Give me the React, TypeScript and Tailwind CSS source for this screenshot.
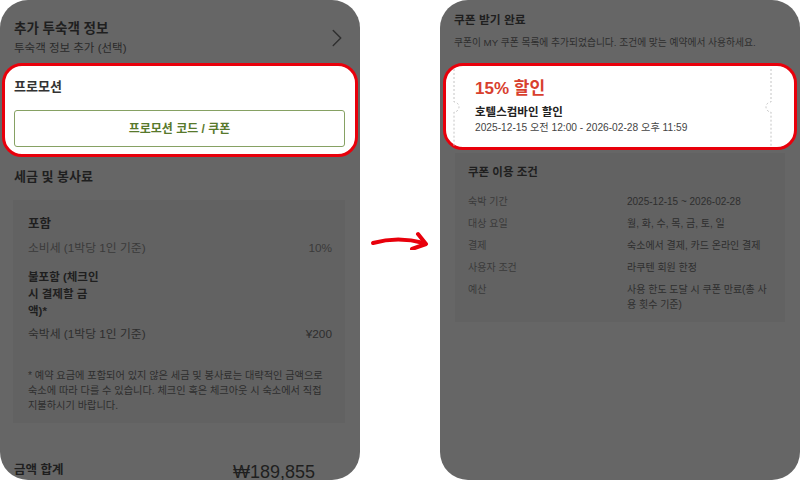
import { Fragment } from 'react';
import { ChevronRight } from 'lucide-react';

const conditions = [
    ['숙박 기간', ['2025-12-15 ~ 2026-02-28']],
    ['대상 요일', ['월, 화, 수, 목, 금, 토, 일']],
    ['결제', ['숙소에서 결제, 카드 온라인 결제']],
    ['사용자 조건', ['라쿠텐 회원 한정']],
    ['예산', ['사용 한도 도달 시 쿠폰 만료(총 사', '용 횟수 기준)']],
] as const;

function BookingPanel() {
    return (
        <div className="h-[480px] w-[360px] shrink-0 overflow-hidden rounded-[28px] bg-[#666666]">
            <div className="flex items-center justify-between pl-[14px] pr-[8px] pt-[19px]">
                <div>
                    <p className="text-[13.5px] font-bold leading-[20px] text-[#1f1f1f]">추가 투숙객 정보</p>
                    <p className="text-[11.5px] leading-[18px] text-[#2a2a2a]">투숙객 정보 추가 (선택)</p>
                </div>
                <ChevronRight className="text-[#303030]" size={30} strokeWidth={1.2} />
            </div>

            <div className="mx-[2px] mt-[6px] rounded-[20px] border-[3px] border-[#e8000b] bg-white pb-[7px] pl-[9px] pr-[10px] pt-[11px]">
                <p className="text-[13px] font-bold leading-[20px] text-[#333333]">프로모션</p>
                <button className="mt-[13px] flex h-[37px] w-full items-center justify-center rounded-[3px] border border-[#86a163] text-[12px] font-bold text-[#58792c]">
                    프로모션 코드 / 쿠폰
                </button>
            </div>

            <p className="ml-[14px] mt-[10px] text-[13px] font-bold leading-[20px] text-[#1f1f1f]">세금 및 봉사료</p>

            <div className="ml-[13px] mt-[13px] w-[332px] bg-[#626262] pb-[10px] pl-[15px] pr-[13px] pt-[14px]">
                <p className="text-[12.5px] font-bold leading-[20px] text-[#1f1f1f]">포함</p>
                <div className="mt-[5px] flex justify-between text-[11.8px] leading-[18px] text-[#3a3a3a]">
                    <span>소비세 (1박당 1인 기준)</span>
                    <span>10%</span>
                </div>
                <p className="mt-[12px] whitespace-nowrap text-[11.5px] font-bold leading-[17px] text-[#1f1f1f]">
                    불포함 (체크인
                    <br />
                    시 결제할 금
                    <br />
                    액)*
                </p>
                <div className="mt-[5px] flex justify-between text-[11.8px] leading-[18px] text-[#2e2e2e]">
                    <span>숙박세 (1박당 1인 기준)</span>
                    <span>¥200</span>
                </div>
                <p className="mt-[25px] whitespace-nowrap text-[10.2px] leading-[15px] text-[#2e2e2e]">
                    * 예약 요금에 포함되어 있지 않은 세금 및 봉사료는 대략적인 금액으로
                    <br />
                    숙소에 따라 다를 수 있습니다. 체크인 혹은 체크아웃 시 숙소에서 직접
                    <br />
                    지불하시기 바랍니다.
                </p>
            </div>

            <div className="ml-[14px] mt-[37px] flex items-start justify-between pr-[45px]">
                <p className="text-[12.5px] font-bold leading-[20px] text-[#1f1f1f]">금액 합계</p>
                <p className="text-[18px] leading-[24px] text-[#1f1f1f]">₩189,855</p>
            </div>
        </div>
    );
}

function CouponPanel() {
    return (
        <div className="h-[480px] w-[360px] shrink-0 overflow-hidden rounded-[28px] bg-[#666666]">
            <p className="ml-[14px] pt-[10px] text-[11.8px] font-bold leading-[20px] text-[#1f1f1f]">쿠폰 받기 완료</p>
            <p className="ml-[14px] mt-[5px] text-[9.75px] leading-[16px] text-[#2e2e2e]">
                쿠폰이 MY 쿠폰 목록에 추가되었습니다. 조건에 맞는 예약에서 사용하세요.
            </p>

            <div className="mx-[3px] mt-[12px] h-[87px] rounded-[20px] border-[3px] border-[#e8000b] bg-white pl-[8px] pr-[23px] pt-[3px]">
                <div className="relative h-full pl-[21px] pt-[8px]">
                    <svg className="absolute left-[-4px] top-0" width="10" height="78" viewBox="0 0 10 78">
                        <path d="M4 0 V33 A5 5 0 0 1 4 43 V78" fill="none" stroke="#c4c4c4" strokeDasharray="2 2" />
                    </svg>
                    <svg className="absolute right-[-4px] top-0" width="10" height="78" viewBox="0 0 10 78">
                        <path d="M6 0 V33 A5 5 0 0 0 6 43 V78" fill="none" stroke="#c4c4c4" strokeDasharray="2 2" />
                    </svg>
                    <p className="text-[17px] font-bold leading-[24px] text-[#d8402e]">15% 할인</p>
                    <p className="mt-[3px] text-[11.5px] font-bold leading-[16px] text-[#222222]">호텔스컴바인 할인</p>
                    <p className="text-[10.2px] leading-[16px] text-[#444444]">2025-12-15 오전 12:00 - 2026-02-28 오후 11:59</p>
                </div>
            </div>

            <div className="ml-[15px] mt-[3px] w-[330px] bg-[#626262] pb-[10px] pl-[13px] pt-[9px]">
                <p className="text-[11.5px] font-bold leading-[20px] text-[#1f1f1f]">쿠폰 이용 조건</p>
                <div className="mt-[12px] flex flex-col gap-[7px] text-[10px] leading-[15px]">
                    {conditions.map(([label, lines]) => (
                        <div className="flex" key={label}>
                            <span className="w-[159px] shrink-0 text-[#3a3a3a]">{label}</span>
                            <span className="whitespace-nowrap text-[#2e2e2e]">
                                {lines.map((line, i) => (
                                    <Fragment key={line}>
                                        {i > 0 && <br />}
                                        {line}
                                    </Fragment>
                                ))}
                            </span>
                        </div>
                    ))}
                </div>
            </div>
        </div>
    );
}

export default function App() {
    return (
        <div className="flex h-[480px] w-[800px] bg-white font-['Liberation_Sans','Noto_Sans_CJK_KR',sans-serif]">
            <BookingPanel />
            <div className="flex w-[80px] shrink-0 items-center">
                <svg width="80" height="20" viewBox="0 0 80 20">
                    <path d="M13 13 Q38 6 64 13" fill="none" stroke="#e8000b" strokeWidth="4" strokeLinecap="round" />
                    <path d="M58 4 L66 14 L52 19" fill="none" stroke="#e8000b" strokeWidth="4" strokeLinecap="round" strokeLinejoin="round" />
                </svg>
            </div>
            <CouponPanel />
        </div>
    );
}
